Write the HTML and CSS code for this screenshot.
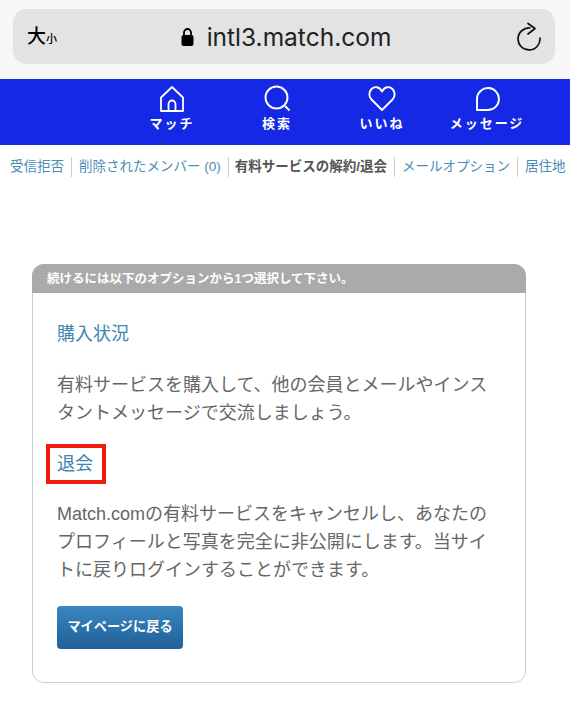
FILE: index.html
```html
<!DOCTYPE html>
<html lang="ja">
<head>
    <meta charset="UTF-8">
    <meta name="viewport" content="width=device-width, initial-scale=1.0">
    <title>Match.com</title>
    <link rel="stylesheet" href="styles.css">
</head>
<body>
    <!-- Safari address bar -->
    <div class="browser-bar">
        <div class="address">
            <span class="text-size">大<small>小</small></span>
            <span class="url">
                <svg class="lock" width="13" height="19" viewBox="0 0 13 19">
                    <path d="M3 8V5.500a3.500 3.500 0 0 1 7 0V8" fill="none" stroke="#000" stroke-width="1.8"/>
                    <rect x="0.5" y="8" width="12" height="11" rx="2" fill="#000"/>
                </svg>
                intl3.match.com
            </span>
            <svg class="reload" width="24" height="30" viewBox="0 0 24 30">
                <path d="M13 6A11 11 0 1 0 23 16" fill="none" stroke="#111" stroke-width="1.7" stroke-linecap="round"/>
                <path d="M11 1.500L18 6.500 11 12" fill="none" stroke="#111" stroke-width="1.7" stroke-linecap="round" stroke-linejoin="round"/>
            </svg>
        </div>
    </div>

    <nav class="main-nav">
        <a class="nav-item" href="#">
            <svg width="26" height="27" viewBox="0 0 26 27">
                <path d="M2 12.500L13 2l11 10.500V26H2z M9.500 26v-7a3.500 3.500 0 0 1 7 0V26" fill="none" stroke="#fff" stroke-width="1.8" stroke-linejoin="round"/>
            </svg>
            <span>マッチ</span>
        </a>
        <a class="nav-item" href="#">
            <svg width="27" height="27" viewBox="0 0 27 27">
                <circle cx="12.500" cy="12.500" r="11" fill="none" stroke="#fff" stroke-width="1.9"/>
                <path d="M21 21l4.500 4.500" stroke="#fff" stroke-width="1.9"/>
            </svg>
            <span>検索</span>
        </a>
        <a class="nav-item" href="#">
            <svg width="28" height="26" viewBox="0 0 28 26">
                <path d="M14 24.500L3.500 14C.5 11 .8 6.500 3.500 3.500 6.500.5 11.500 1 14 6 16.500 1 21.500.5 24.500 3.500 27.200 6.500 27.500 11 24.500 14z" fill="none" stroke="#fff" stroke-width="1.9" stroke-linejoin="round"/>
            </svg>
            <span>いいね</span>
        </a>
        <a class="nav-item" href="#">
            <svg width="25" height="26" viewBox="0 0 25 26">
                <path d="M2 24.500V12.500A11 11 0 1 1 13 24.500z" fill="none" stroke="#fff" stroke-width="1.9" stroke-linejoin="round"/>
            </svg>
            <span>メッセージ</span>
        </a>
    </nav>

    <ul class="sub-nav">
        <li><a href="#">受信拒否</a></li>
        <li class="deleted"><a href="#">削除されたメンバー (0)</a></li>
        <li class="current">有料サービスの解約/退会</li>
        <li><a href="#">メールオプション</a></li>
        <li><a href="#">居住地</a></li>
    </ul>

    <div class="option-box">
        <div class="box-head">続けるには以下のオプションから1つ選択して下さい。</div>
        <div class="box-body">
            <h3 class="option-title"><a href="#">購入状況</a></h3>
            <p class="option-text">有料サービスを購入して、他の会員とメールやインスタントメッセージで交流しましょう。</p>
            <h3 class="option-title option-leave"><a href="#">退会</a></h3>
            <p class="option-text option-text-leave">Match.comの有料サービスをキャンセルし、あなたのプロフィールと写真を完全に非公開にします。当サイトに戻りログインすることができます。</p>
            <a class="back-btn" href="#">マイページに戻る</a>
        </div>
    </div>
</body>
</html>
```

FILE: styles.css
```css
* {
    margin: 0;
    padding: 0;
    box-sizing: border-box;
}

body {
    font-family: "Liberation Sans", "Noto Sans CJK JP", sans-serif;
    background-color: #fff;
    color: #666;
    overflow: hidden;
}

a {
    color: inherit;
    text-decoration: none;
}

/* Browser bar */
.browser-bar {
    height: 79px;
    padding: 9px 15px 15px 13px;
    background-color: #f7f7f7;
}

.address {
    position: relative;
    display: flex;
    align-items: center;
    justify-content: center;
    height: 55px;
    background-color: #e3e3e3;
    border-radius: 14px;
}

.text-size {
    position: absolute;
    left: 14px;
    top: 15px;
    color: #000;
    font-size: 19px;
    line-height: 26px;
    font-weight: 500;
}

.text-size small {
    font-size: 11px;
}

.url {
    display: flex;
    align-items: center;
    gap: 13px;
    margin-left: 4px;
    color: #222;
    font-family: "Inter", "Liberation Sans", sans-serif;
    font-size: 24.5px;
}

.reload {
    position: absolute;
    right: 14px;
    top: 13px;
}

/* Blue nav */
.main-nav {
    display: flex;
    gap: 15px;
    height: 66px;
    padding: 6px 0 0 127px;
    background-color: #1428e6;
    color: #fff;
}

.nav-item {
    display: flex;
    flex-direction: column;
    align-items: center;
    width: 90px;
    font-size: 13px;
    font-weight: 700;
    letter-spacing: 2px;
}

.nav-item svg {
    display: block;
    height: 27px;
    margin-bottom: 2px;
}

.nav-item span {
    line-height: 19px;
    white-space: nowrap;
}

/* Sub nav */
.sub-nav {
    display: flex;
    align-items: center;
    height: 20px;
    margin-top: 12px;
    padding-left: 10px;
    list-style: none;
    color: #4a8db5;
    font-size: 13.5px;
    line-height: 20px;
    white-space: nowrap;
}

.sub-nav li {
    padding-right: 7px;
    margin-right: 7px;
    border-right: 1px solid #ccc;
}

.sub-nav .deleted {
    margin-right: 6px;
}

.sub-nav li:last-child {
    border-right: none;
    margin-right: 0;
    padding-right: 0;
}

.sub-nav .current {
    color: #555;
    font-weight: 700;
}

/* Option box */
.option-box {
    width: 494px;
    height: 419px;
    margin: 87px 0 0 32px;
    background-color: #fff;
    border: 1px solid #ccc;
    border-radius: 12px;
}

.box-head {
    height: 29px;
    margin: -1px -1px 0;
    padding-left: 15px;
    background-color: #aaa;
    border-radius: 12px 12px 0 0;
    color: #fff;
    font-size: 12.5px;
    font-weight: 700;
    line-height: 30px;
}

.box-body {
    padding: 28px 24px 0;
}

.option-title {
    color: #3c86b0;
    font-size: 18px;
    font-weight: 400;
    line-height: 26px;
}

.option-text {
    margin-top: 24px;
    color: #666;
    font-size: 18px;
    line-height: 28px;
}

.option-text-leave {
    margin-top: 23px;
}

.option-leave {
    position: relative;
    margin-top: 24px;
}

/* Red highlight drawn over the page */
.option-leave::after {
    content: "";
    position: absolute;
    left: -11px;
    top: -7px;
    width: 60px;
    height: 40px;
    border: 4px solid #f21a0d;
    box-sizing: border-box;
}

.back-btn {
    display: inline-block;
    width: 126px;
    height: 43px;
    margin-top: 22px;
    background: linear-gradient(#3a86c0, #1f6096);
    border-radius: 4px;
    color: #fff;
    font-size: 13.2px;
    font-weight: 700;
    line-height: 41px;
    text-align: center;
}
```
